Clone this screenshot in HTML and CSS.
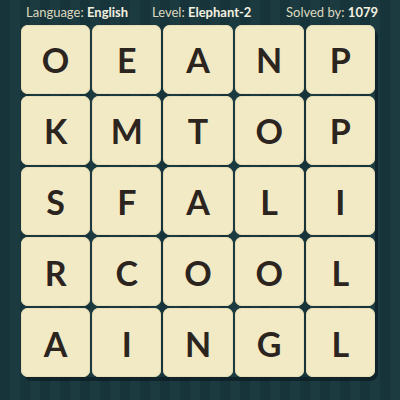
FILE: index.html
```html
<!DOCTYPE html>
<html>
<head>
<meta charset="utf-8">
<link rel="stylesheet" href="styles.css">
</head>
<body>
<div class="page">
  <div class="header">
    <span class="item">Language: <b>English</b></span>
    <span class="item">Level: <b>Elephant-2</b></span>
    <span class="item">Solved by: <b>1079</b></span>
  </div>
  <div class="board">
    <div class="tile">O</div><div class="tile">E</div><div class="tile">A</div><div class="tile">N</div><div class="tile">P</div>
    <div class="tile">K</div><div class="tile">M</div><div class="tile">T</div><div class="tile">O</div><div class="tile">P</div>
    <div class="tile">S</div><div class="tile">F</div><div class="tile">A</div><div class="tile">L</div><div class="tile">I</div>
    <div class="tile">R</div><div class="tile">C</div><div class="tile">O</div><div class="tile">O</div><div class="tile">L</div>
    <div class="tile">A</div><div class="tile">I</div><div class="tile">N</div><div class="tile">G</div><div class="tile">L</div>
  </div>
</div>
</body>
</html>
```
FILE: styles.css
```css
html, body {
  margin: 0;
  padding: 0;
}
body {
  width: 400px;
  height: 400px;
  overflow: hidden;
  background: repeating-linear-gradient(90deg, #17343a 0px, #17343a 10px, #1b3b41 10px, #1b3b41 20px);
  font-family: Lato, "Open Sans", sans-serif;
}
.page {
  display: flex;
  flex-direction: column;
  align-items: flex-start;
}
.header {
  height: 25px;
  display: flex;
  align-items: center;
  padding-left: 26px;
  gap: 0;
  color: #ddd8bf;
  font-size: 13px;
  line-height: 1;
}
.header .item:nth-child(1) { width: 126px; }
.header .item:nth-child(2) { width: 134px; }
.header b {
  color: #f4f0e0;
  font-weight: 700;
}
.board {
  margin-left: 21px;
  width: 354px;
  height: 352px;
  display: grid;
  grid-template-columns: repeat(5, 1fr);
  grid-template-rows: repeat(5, 1fr);
  gap: 2px;
  box-shadow: 3px 4px 0 rgba(8, 24, 28, 0.6);
  border-radius: 8px;
}
.tile {
  background: #f2eac5;
  border-radius: 7px;
  box-shadow: inset 0 0 0 1px #e8dfb8;
  display: flex;
  align-items: center;
  justify-content: center;
  color: #2b241f;
  font-size: 34px;
  font-weight: 700;
  padding-top: 1px;
}
```
